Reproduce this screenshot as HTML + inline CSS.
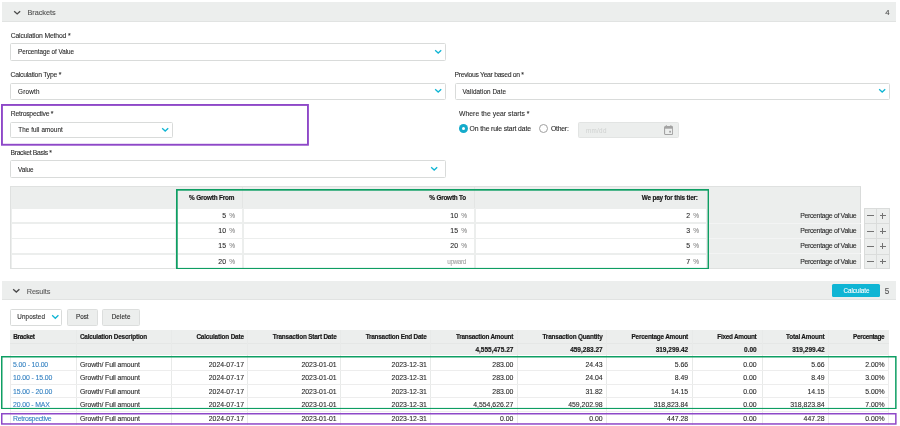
<!DOCTYPE html>
<html><head><meta charset="utf-8"><style>
html,body{margin:0;padding:0;background:#fff;width:900px;height:426px;overflow:hidden;position:relative;font-family:"Liberation Sans",sans-serif;}
.t{position:absolute;line-height:1;white-space:nowrap;-webkit-text-stroke:0.1px currentColor;}
body{will-change:transform;}
.b{position:absolute;}
</style></head><body>
<div class="b" style="left:2.00px;top:2.00px;width:894.00px;height:20.40px;background:#eceeed;border-bottom:1px solid #e1e3e2;box-sizing:border-box"></div>
<svg class="b" style="left:13.70px;top:10.90px;overflow:visible" width="6.30" height="3.70"><path d="M0.68 0.68 L3.15 2.89 L5.63 0.68" fill="none" stroke="#4a4a4a" stroke-width="1.35" stroke-linecap="square" stroke-linejoin="miter"/></svg>
<div class="t" style="left:27.50px;top:9px;font-size:7.3px;font-weight:400;color:#505050;letter-spacing:-0.042px;">Brackets</div>
<div class="t" style="left:489.60px;width:400px;text-align:right;top:9px;font-size:7.8px;font-weight:400;color:#4e4e4e;">4</div>
<div class="t" style="left:10.70px;top:33px;font-size:6.8px;font-weight:400;color:#2e2e2e;letter-spacing:-0.150px;">Calculation Method *</div>
<div class="b" style="left:10.00px;top:43.30px;width:436.00px;height:17.30px;background:#fff;border:1px solid #d9dbda;border-radius:1.5px;box-sizing:border-box"></div>
<div class="t" style="left:18.00px;top:49px;font-size:6.3px;font-weight:400;color:#2a2a2a;letter-spacing:-0.035px;">Percentage of Value</div>
<svg class="b" style="left:435.00px;top:50.15px;overflow:visible" width="6.40" height="3.80"><path d="M0.68 0.68 L3.20 2.99 L5.72 0.68" fill="none" stroke="#0fb5d4" stroke-width="1.35" stroke-linecap="square" stroke-linejoin="miter"/></svg>
<div class="t" style="left:10.50px;top:72px;font-size:6.8px;font-weight:400;color:#2e2e2e;letter-spacing:-0.217px;">Calculation Type *</div>
<div class="b" style="left:10.00px;top:82.50px;width:436.00px;height:17.10px;background:#fff;border:1px solid #d9dbda;border-radius:1.5px;box-sizing:border-box"></div>
<div class="t" style="left:18.00px;top:89px;font-size:6.3px;font-weight:400;color:#2a2a2a;letter-spacing:0.239px;">Growth</div>
<svg class="b" style="left:435.00px;top:89.25px;overflow:visible" width="6.40" height="3.80"><path d="M0.68 0.68 L3.20 2.99 L5.72 0.68" fill="none" stroke="#0fb5d4" stroke-width="1.35" stroke-linecap="square" stroke-linejoin="miter"/></svg>
<div class="t" style="left:454.50px;top:72px;font-size:6.8px;font-weight:400;color:#2e2e2e;letter-spacing:-0.299px;">Previous Year based on *</div>
<div class="b" style="left:454.50px;top:82.50px;width:435.50px;height:17.10px;background:#fff;border:1px solid #d9dbda;border-radius:1.5px;box-sizing:border-box"></div>
<div class="t" style="left:462.50px;top:89px;font-size:6.3px;font-weight:400;color:#2a2a2a;letter-spacing:0.089px;">Validation Date</div>
<svg class="b" style="left:879.00px;top:89.25px;overflow:visible" width="6.40" height="3.80"><path d="M0.68 0.68 L3.20 2.99 L5.72 0.68" fill="none" stroke="#0fb5d4" stroke-width="1.35" stroke-linecap="square" stroke-linejoin="miter"/></svg>
<div class="t" style="left:10.80px;top:111px;font-size:6.8px;font-weight:400;color:#2e2e2e;letter-spacing:-0.244px;">Retrospective *</div>
<div class="b" style="left:10.30px;top:121.50px;width:162.30px;height:16.70px;background:#fff;border:1px solid #d9dbda;border-radius:1.5px;box-sizing:border-box"></div>
<div class="t" style="left:18.30px;top:127px;font-size:6.3px;font-weight:400;color:#2a2a2a;letter-spacing:0.077px;">The full amount</div>
<svg class="b" style="left:161.60px;top:128.05px;overflow:visible" width="6.40" height="3.80"><path d="M0.68 0.68 L3.20 2.99 L5.73 0.68" fill="none" stroke="#0fb5d4" stroke-width="1.35" stroke-linecap="square" stroke-linejoin="miter"/></svg>
<svg class="b" style="left:1.20px;top:104.00px" width="307.90" height="41.70"><rect x="0.95" y="0.95" width="306.00" height="39.80" fill="none" stroke="#8e48c8" stroke-width="1.9"/></svg>
<div class="t" style="left:459.00px;top:111px;font-size:6.8px;font-weight:400;color:#2e2e2e;letter-spacing:0.044px;">Where the year starts *</div>
<div class="b" style="left:458.7px;top:123.8px;width:9px;height:9px;border-radius:50%;background:#14abcb;"></div>
<div class="b" style="left:461.5px;top:126.6px;width:3.4px;height:3.4px;border-radius:50%;background:#fff;"></div>
<div class="t" style="left:469.60px;top:126px;font-size:6.8px;font-weight:400;color:#2a2a2a;letter-spacing:-0.118px;">On the rule start date</div>
<div class="b" style="left:539.3px;top:124.2px;width:9px;height:9px;border-radius:50%;border:1px solid #a0a0a0;box-sizing:border-box;background:#fff"></div>
<div class="t" style="left:551.00px;top:126px;font-size:6.8px;font-weight:400;color:#2a2a2a;letter-spacing:-0.219px;">Other:</div>
<div class="b" style="left:578.00px;top:121.70px;width:101.30px;height:16.50px;background:#eceeed;border:1px solid #e2e4e3;border-radius:1.5px;box-sizing:border-box"></div>
<div class="t" style="left:586.00px;top:128px;font-size:6.3px;font-weight:400;color:#cfd1d0;letter-spacing:0.287px;-webkit-text-stroke:0;">mm/dd</div>
<svg class="b" style="left:664.2px;top:125px" width="9.2" height="10" viewBox="0 0 9.2 10"><rect x="0.55" y="1.5" width="8.1" height="8" rx="1.1" fill="none" stroke="#a3a3a3" stroke-width="1.1"/><rect x="0.6" y="1.5" width="8" height="2.2" fill="#a3a3a3"/><rect x="1.8" y="0.2" width="1.1" height="2" fill="#a3a3a3"/><rect x="6.3" y="0.2" width="1.1" height="2" fill="#a3a3a3"/><rect x="5.2" y="5.8" width="1.8" height="1.8" fill="#a3a3a3"/></svg>
<div class="t" style="left:10.50px;top:150px;font-size:6.8px;font-weight:400;color:#2e2e2e;letter-spacing:-0.329px;">Bracket Basis *</div>
<div class="b" style="left:10.00px;top:160.20px;width:436.00px;height:17.40px;background:#fff;border:1px solid #d9dbda;border-radius:1.5px;box-sizing:border-box"></div>
<div class="t" style="left:18.00px;top:167px;font-size:6.3px;font-weight:400;color:#2a2a2a;letter-spacing:-0.036px;">Value</div>
<svg class="b" style="left:431.40px;top:167.10px;overflow:visible" width="6.40" height="3.80"><path d="M0.68 0.68 L3.20 2.99 L5.72 0.68" fill="none" stroke="#0fb5d4" stroke-width="1.35" stroke-linecap="square" stroke-linejoin="miter"/></svg>
<div class="b" style="left:10.20px;top:186.20px;width:851.30px;height:83.10px;background:#eceeed;border:1px solid #dfe1e0;border-right-color:#d9dbda;box-sizing:border-box"></div>
<div class="t" style="left:-165.89px;width:400px;text-align:right;top:195px;font-size:6.4px;font-weight:700;color:#181818;-webkit-text-stroke:0.16px currentColor;letter-spacing:-0.195px;">% Growth From</div>
<div class="t" style="left:65.99px;width:400px;text-align:right;top:195px;font-size:6.4px;font-weight:700;color:#181818;-webkit-text-stroke:0.16px currentColor;letter-spacing:-0.209px;">% Growth To</div>
<div class="t" style="left:297.84px;width:400px;text-align:right;top:195px;font-size:6.4px;font-weight:700;color:#181818;-webkit-text-stroke:0.16px currentColor;letter-spacing:-0.161px;">We pay for this tier:</div>
<div class="b" style="left:242.10px;top:187.00px;width:1.10px;height:21.00px;background:#e3e5e4"></div>
<div class="b" style="left:474.20px;top:187.00px;width:1.10px;height:21.00px;background:#e3e5e4"></div>
<div class="b" style="left:11.70px;top:209.20px;width:163.50px;height:13.10px;background:#fff"></div>
<div class="b" style="left:177.60px;top:209.20px;width:64.30px;height:13.10px;background:#fff"></div>
<div class="b" style="left:243.70px;top:209.20px;width:230.20px;height:13.10px;background:#fff"></div>
<div class="b" style="left:475.60px;top:209.20px;width:230.90px;height:13.10px;background:#fff"></div>
<div class="t" style="left:-174.00px;width:400px;text-align:right;top:213px;font-size:6.9px;font-weight:400;color:#2a2a2a;">5</div>
<div class="t" style="left:-165.00px;width:400px;text-align:right;top:213px;font-size:6.6px;font-weight:400;color:#8c8c8c;">%</div>
<div class="t" style="left:58.00px;width:400px;text-align:right;top:213px;font-size:6.9px;font-weight:400;color:#2a2a2a;">10</div>
<div class="t" style="left:67.00px;width:400px;text-align:right;top:213px;font-size:6.6px;font-weight:400;color:#8c8c8c;">%</div>
<div class="t" style="left:290.00px;width:400px;text-align:right;top:213px;font-size:6.9px;font-weight:400;color:#2a2a2a;">2</div>
<div class="t" style="left:299.00px;width:400px;text-align:right;top:213px;font-size:6.6px;font-weight:400;color:#8c8c8c;">%</div>
<div class="t" style="left:456.19px;width:400px;text-align:right;top:213px;font-size:6.9px;font-weight:400;color:#2a2a2a;letter-spacing:-0.312px;">Percentage of Value</div>
<div class="b" style="left:708.00px;top:222.60px;width:152.50px;height:1.00px;background:#f3f4f4"></div>
<div class="b" style="left:864.20px;top:208.30px;width:25.60px;height:60.90px;background:#eceeed;border:1px solid #dadcdb;box-sizing:border-box"></div>
<div class="b" style="left:876.20px;top:208.30px;width:0.80px;height:60.90px;background:#dadcdb"></div>
<div class="b" style="left:864.20px;top:223.10px;width:25.60px;height:0.80px;background:#dadcdb"></div>
<div class="b" style="left:867.00px;top:215.30px;width:7.20px;height:1.10px;background:#737373"></div>
<div class="b" style="left:879.60px;top:215.30px;width:6.70px;height:1.10px;background:#737373"></div>
<div class="b" style="left:882.40px;top:213.00px;width:1.10px;height:5.80px;background:#737373"></div>
<div class="b" style="left:11.70px;top:223.90px;width:163.50px;height:13.90px;background:#fff"></div>
<div class="b" style="left:177.60px;top:223.90px;width:64.30px;height:13.90px;background:#fff"></div>
<div class="b" style="left:243.70px;top:223.90px;width:230.20px;height:13.90px;background:#fff"></div>
<div class="b" style="left:475.60px;top:223.90px;width:230.90px;height:13.90px;background:#fff"></div>
<div class="t" style="left:-174.00px;width:400px;text-align:right;top:228px;font-size:6.9px;font-weight:400;color:#2a2a2a;">10</div>
<div class="t" style="left:-165.00px;width:400px;text-align:right;top:228px;font-size:6.6px;font-weight:400;color:#8c8c8c;">%</div>
<div class="t" style="left:58.00px;width:400px;text-align:right;top:228px;font-size:6.9px;font-weight:400;color:#2a2a2a;">15</div>
<div class="t" style="left:67.00px;width:400px;text-align:right;top:228px;font-size:6.6px;font-weight:400;color:#8c8c8c;">%</div>
<div class="t" style="left:290.00px;width:400px;text-align:right;top:228px;font-size:6.9px;font-weight:400;color:#2a2a2a;">3</div>
<div class="t" style="left:299.00px;width:400px;text-align:right;top:228px;font-size:6.6px;font-weight:400;color:#8c8c8c;">%</div>
<div class="t" style="left:456.19px;width:400px;text-align:right;top:228px;font-size:6.9px;font-weight:400;color:#2a2a2a;letter-spacing:-0.312px;">Percentage of Value</div>
<div class="b" style="left:708.00px;top:238.10px;width:152.50px;height:0.90px;background:#f3f4f4"></div>
<div class="b" style="left:864.20px;top:238.30px;width:25.60px;height:0.80px;background:#dadcdb"></div>
<div class="b" style="left:867.00px;top:230.50px;width:7.20px;height:1.10px;background:#737373"></div>
<div class="b" style="left:879.60px;top:230.50px;width:6.70px;height:1.10px;background:#737373"></div>
<div class="b" style="left:882.40px;top:228.20px;width:1.10px;height:5.80px;background:#737373"></div>
<div class="b" style="left:11.70px;top:239.30px;width:163.50px;height:13.60px;background:#fff"></div>
<div class="b" style="left:177.60px;top:239.30px;width:64.30px;height:13.60px;background:#fff"></div>
<div class="b" style="left:243.70px;top:239.30px;width:230.20px;height:13.60px;background:#fff"></div>
<div class="b" style="left:475.60px;top:239.30px;width:230.90px;height:13.60px;background:#fff"></div>
<div class="t" style="left:-174.00px;width:400px;text-align:right;top:243px;font-size:6.9px;font-weight:400;color:#2a2a2a;">15</div>
<div class="t" style="left:-165.00px;width:400px;text-align:right;top:243px;font-size:6.6px;font-weight:400;color:#8c8c8c;">%</div>
<div class="t" style="left:58.00px;width:400px;text-align:right;top:243px;font-size:6.9px;font-weight:400;color:#2a2a2a;">20</div>
<div class="t" style="left:67.00px;width:400px;text-align:right;top:243px;font-size:6.6px;font-weight:400;color:#8c8c8c;">%</div>
<div class="t" style="left:290.00px;width:400px;text-align:right;top:243px;font-size:6.9px;font-weight:400;color:#2a2a2a;">5</div>
<div class="t" style="left:299.00px;width:400px;text-align:right;top:243px;font-size:6.6px;font-weight:400;color:#8c8c8c;">%</div>
<div class="t" style="left:456.19px;width:400px;text-align:right;top:243px;font-size:6.9px;font-weight:400;color:#2a2a2a;letter-spacing:-0.312px;">Percentage of Value</div>
<div class="b" style="left:708.00px;top:253.20px;width:152.50px;height:1.10px;background:#f3f4f4"></div>
<div class="b" style="left:864.20px;top:253.50px;width:25.60px;height:0.80px;background:#dadcdb"></div>
<div class="b" style="left:867.00px;top:245.70px;width:7.20px;height:1.10px;background:#737373"></div>
<div class="b" style="left:879.60px;top:245.70px;width:6.70px;height:1.10px;background:#737373"></div>
<div class="b" style="left:882.40px;top:243.40px;width:1.10px;height:5.80px;background:#737373"></div>
<div class="b" style="left:11.70px;top:254.60px;width:163.50px;height:13.00px;background:#fff"></div>
<div class="b" style="left:177.60px;top:254.60px;width:64.30px;height:13.00px;background:#fff"></div>
<div class="b" style="left:243.70px;top:254.60px;width:230.20px;height:13.00px;background:#fff"></div>
<div class="b" style="left:475.60px;top:254.60px;width:230.90px;height:13.00px;background:#fff"></div>
<div class="t" style="left:-174.00px;width:400px;text-align:right;top:259px;font-size:6.9px;font-weight:400;color:#2a2a2a;">20</div>
<div class="t" style="left:-165.00px;width:400px;text-align:right;top:259px;font-size:6.6px;font-weight:400;color:#8c8c8c;">%</div>
<div class="t" style="left:65.90px;width:400px;text-align:right;top:259px;font-size:6.4px;font-weight:400;color:#a5a5a5;letter-spacing:-0.398px;">upward</div>
<div class="t" style="left:290.00px;width:400px;text-align:right;top:259px;font-size:6.9px;font-weight:400;color:#2a2a2a;">7</div>
<div class="t" style="left:299.00px;width:400px;text-align:right;top:259px;font-size:6.6px;font-weight:400;color:#8c8c8c;">%</div>
<div class="t" style="left:456.19px;width:400px;text-align:right;top:259px;font-size:6.9px;font-weight:400;color:#2a2a2a;letter-spacing:-0.312px;">Percentage of Value</div>
<div class="b" style="left:867.00px;top:260.90px;width:7.20px;height:1.10px;background:#737373"></div>
<div class="b" style="left:879.60px;top:260.90px;width:6.70px;height:1.10px;background:#737373"></div>
<div class="b" style="left:882.40px;top:258.60px;width:1.10px;height:5.80px;background:#737373"></div>
<svg class="b" style="left:175.80px;top:188.80px" width="533.30" height="80.60"><rect x="0.85" y="0.85" width="531.60" height="78.90" fill="none" stroke="#0e9e63" stroke-width="1.7"/></svg>
<div class="b" style="left:2.00px;top:281.00px;width:894.00px;height:19.20px;background:#eceeed;border-bottom:1px solid #e1e3e2;box-sizing:border-box"></div>
<svg class="b" style="left:13.10px;top:288.50px;overflow:visible" width="6.60" height="3.90"><path d="M0.68 0.68 L3.30 3.09 L5.92 0.68" fill="none" stroke="#4a4a4a" stroke-width="1.35" stroke-linecap="square" stroke-linejoin="miter"/></svg>
<div class="t" style="left:26.80px;top:288px;font-size:7.3px;font-weight:400;color:#5c5c5c;letter-spacing:-0.140px;">Results</div>
<div class="b" style="left:832.20px;top:283.50px;width:47.80px;height:13.90px;background:#0fb5d4;border-radius:1.5px"></div>
<div class="t" style="left:843.60px;top:288px;font-size:6.3px;font-weight:400;color:#ffffff;letter-spacing:-0.058px;">Calculate</div>
<div class="t" style="left:489.40px;width:400px;text-align:right;top:288px;font-size:8.2px;font-weight:400;color:#555555;">5</div>
<div class="b" style="left:9.80px;top:308.50px;width:52.20px;height:17.30px;background:#fff;border:1px solid #d9dbda;border-radius:1.5px;box-sizing:border-box"></div>
<div class="t" style="left:17.30px;top:314px;font-size:6.3px;font-weight:400;color:#2a2a2a;letter-spacing:0.104px;">Unposted</div>
<svg class="b" style="left:51.60px;top:315.20px;overflow:visible" width="6.60" height="4.00"><path d="M0.65 0.65 L3.30 3.22 L5.95 0.65" fill="none" stroke="#0fb5d4" stroke-width="1.3" stroke-linecap="square" stroke-linejoin="miter"/></svg>
<div class="b" style="left:66.60px;top:308.50px;width:31.00px;height:17.30px;background:#eceeed;border:1px solid #dcdedd;border-radius:1.5px;box-sizing:border-box"></div>
<div class="t" style="left:76.00px;top:314px;font-size:6.3px;font-weight:400;color:#2a2a2a;letter-spacing:-0.002px;">Post</div>
<div class="b" style="left:102.30px;top:308.50px;width:37.60px;height:17.30px;background:#eceeed;border:1px solid #dcdedd;border-radius:1.5px;box-sizing:border-box"></div>
<div class="t" style="left:111.70px;top:314px;font-size:6.3px;font-weight:400;color:#2a2a2a;letter-spacing:0.117px;">Delete</div>
<div class="b" style="left:10.00px;top:329.90px;width:878.70px;height:24.90px;background:#eceeed"></div>
<div class="b" style="left:10.00px;top:342.80px;width:878.70px;height:0.80px;background:#e5e7e6"></div>
<div class="b" style="left:75.95px;top:329.90px;width:0.90px;height:95.60px;background:#e8eae9"></div>
<div class="b" style="left:170.95px;top:329.90px;width:0.90px;height:95.60px;background:#e8eae9"></div>
<div class="b" style="left:246.85px;top:329.90px;width:0.90px;height:95.60px;background:#e8eae9"></div>
<div class="b" style="left:339.85px;top:329.90px;width:0.90px;height:95.60px;background:#e8eae9"></div>
<div class="b" style="left:429.85px;top:329.90px;width:0.90px;height:95.60px;background:#e8eae9"></div>
<div class="b" style="left:516.55px;top:329.90px;width:0.90px;height:95.60px;background:#e8eae9"></div>
<div class="b" style="left:606.25px;top:329.90px;width:0.90px;height:95.60px;background:#e8eae9"></div>
<div class="b" style="left:691.95px;top:329.90px;width:0.90px;height:95.60px;background:#e8eae9"></div>
<div class="b" style="left:761.55px;top:329.90px;width:0.90px;height:95.60px;background:#e8eae9"></div>
<div class="b" style="left:828.25px;top:329.90px;width:0.90px;height:95.60px;background:#e8eae9"></div>
<div class="b" style="left:9.50px;top:354.80px;width:0.90px;height:70.70px;background:#ececec"></div>
<div class="b" style="left:888.30px;top:354.80px;width:0.90px;height:70.70px;background:#ececec"></div>
<div class="t" style="left:13.30px;top:334px;font-size:6.4px;font-weight:700;color:#181818;-webkit-text-stroke:0.16px currentColor;letter-spacing:-0.297px;">Bracket</div>
<div class="t" style="left:79.90px;top:334px;font-size:6.4px;font-weight:700;color:#181818;-webkit-text-stroke:0.16px currentColor;letter-spacing:-0.190px;">Calculation Description</div>
<div class="t" style="left:-156.16px;width:400px;text-align:right;top:334px;font-size:6.4px;font-weight:700;color:#181818;-webkit-text-stroke:0.16px currentColor;letter-spacing:-0.163px;">Calculation Date</div>
<div class="t" style="left:-63.49px;width:400px;text-align:right;top:334px;font-size:6.4px;font-weight:700;color:#181818;-webkit-text-stroke:0.16px currentColor;letter-spacing:-0.187px;">Transaction Start Date</div>
<div class="t" style="left:26.57px;width:400px;text-align:right;top:334px;font-size:6.4px;font-weight:700;color:#181818;-webkit-text-stroke:0.16px currentColor;letter-spacing:-0.223px;">Transaction End Date</div>
<div class="t" style="left:113.17px;width:400px;text-align:right;top:334px;font-size:6.4px;font-weight:700;color:#181818;-webkit-text-stroke:0.16px currentColor;letter-spacing:-0.237px;">Transaction Amount</div>
<div class="t" style="left:202.53px;width:400px;text-align:right;top:334px;font-size:6.4px;font-weight:700;color:#181818;-webkit-text-stroke:0.16px currentColor;letter-spacing:-0.177px;">Transaction Quantity</div>
<div class="t" style="left:287.98px;width:400px;text-align:right;top:334px;font-size:6.4px;font-weight:700;color:#181818;-webkit-text-stroke:0.16px currentColor;letter-spacing:-0.220px;">Percentage Amount</div>
<div class="t" style="left:356.43px;width:400px;text-align:right;top:334px;font-size:6.4px;font-weight:700;color:#181818;-webkit-text-stroke:0.16px currentColor;letter-spacing:-0.275px;">Fixed Amount</div>
<div class="t" style="left:424.53px;width:400px;text-align:right;top:334px;font-size:6.4px;font-weight:700;color:#181818;-webkit-text-stroke:0.16px currentColor;letter-spacing:-0.166px;">Total Amount</div>
<div class="t" style="left:484.39px;width:400px;text-align:right;top:334px;font-size:6.4px;font-weight:700;color:#181818;-webkit-text-stroke:0.16px currentColor;letter-spacing:-0.312px;">Percentage</div>
<div class="t" style="left:113.40px;width:400px;text-align:right;top:347px;font-size:6.5px;font-weight:700;color:#181818;-webkit-text-stroke:0.16px currentColor;">4,555,475.27</div>
<div class="t" style="left:202.70px;width:400px;text-align:right;top:347px;font-size:6.5px;font-weight:700;color:#181818;-webkit-text-stroke:0.16px currentColor;">459,283.27</div>
<div class="t" style="left:288.20px;width:400px;text-align:right;top:347px;font-size:6.5px;font-weight:700;color:#181818;-webkit-text-stroke:0.16px currentColor;">319,299.42</div>
<div class="t" style="left:356.70px;width:400px;text-align:right;top:347px;font-size:6.5px;font-weight:700;color:#181818;-webkit-text-stroke:0.16px currentColor;">0.00</div>
<div class="t" style="left:424.70px;width:400px;text-align:right;top:347px;font-size:6.5px;font-weight:700;color:#181818;-webkit-text-stroke:0.16px currentColor;">319,299.42</div>
<div class="b" style="left:10.00px;top:370.20px;width:878.70px;height:0.80px;background:#ededed"></div>
<div class="b" style="left:10.00px;top:383.80px;width:878.70px;height:0.80px;background:#ededed"></div>
<div class="b" style="left:10.00px;top:397.40px;width:878.70px;height:0.80px;background:#ededed"></div>
<div class="b" style="left:10.00px;top:410.90px;width:878.70px;height:0.80px;background:#ededed"></div>
<div class="t" style="left:13.10px;top:362px;font-size:6.9px;font-weight:400;color:#3380c2;letter-spacing:-0.157px;">5.00 - 10.00</div>
<div class="t" style="left:80.00px;top:362px;font-size:6.9px;font-weight:400;color:#2a2a2a;letter-spacing:-0.118px;">Growth/ Full amount</div>
<div class="t" style="left:-156.00px;width:400px;text-align:right;top:362px;font-size:6.9px;font-weight:400;color:#2a2a2a;">2024-07-17</div>
<div class="t" style="left:-63.30px;width:400px;text-align:right;top:362px;font-size:6.9px;font-weight:400;color:#2a2a2a;">2023-01-01</div>
<div class="t" style="left:26.80px;width:400px;text-align:right;top:362px;font-size:6.9px;font-weight:400;color:#2a2a2a;">2023-12-31</div>
<div class="t" style="left:113.40px;width:400px;text-align:right;top:362px;font-size:6.9px;font-weight:400;color:#2a2a2a;">283.00</div>
<div class="t" style="left:202.70px;width:400px;text-align:right;top:362px;font-size:6.9px;font-weight:400;color:#2a2a2a;">24.43</div>
<div class="t" style="left:288.20px;width:400px;text-align:right;top:362px;font-size:6.9px;font-weight:400;color:#2a2a2a;">5.66</div>
<div class="t" style="left:356.70px;width:400px;text-align:right;top:362px;font-size:6.9px;font-weight:400;color:#2a2a2a;">0.00</div>
<div class="t" style="left:424.70px;width:400px;text-align:right;top:362px;font-size:6.9px;font-weight:400;color:#2a2a2a;">5.66</div>
<div class="t" style="left:484.70px;width:400px;text-align:right;top:362px;font-size:6.9px;font-weight:400;color:#2a2a2a;">2.00%</div>
<div class="t" style="left:13.10px;top:375px;font-size:6.9px;font-weight:400;color:#3380c2;letter-spacing:-0.122px;">10.00 - 15.00</div>
<div class="t" style="left:80.00px;top:375px;font-size:6.9px;font-weight:400;color:#2a2a2a;letter-spacing:-0.118px;">Growth/ Full amount</div>
<div class="t" style="left:-156.00px;width:400px;text-align:right;top:375px;font-size:6.9px;font-weight:400;color:#2a2a2a;">2024-07-17</div>
<div class="t" style="left:-63.30px;width:400px;text-align:right;top:375px;font-size:6.9px;font-weight:400;color:#2a2a2a;">2023-01-01</div>
<div class="t" style="left:26.80px;width:400px;text-align:right;top:375px;font-size:6.9px;font-weight:400;color:#2a2a2a;">2023-12-31</div>
<div class="t" style="left:113.40px;width:400px;text-align:right;top:375px;font-size:6.9px;font-weight:400;color:#2a2a2a;">283.00</div>
<div class="t" style="left:202.70px;width:400px;text-align:right;top:375px;font-size:6.9px;font-weight:400;color:#2a2a2a;">24.04</div>
<div class="t" style="left:288.20px;width:400px;text-align:right;top:375px;font-size:6.9px;font-weight:400;color:#2a2a2a;">8.49</div>
<div class="t" style="left:356.70px;width:400px;text-align:right;top:375px;font-size:6.9px;font-weight:400;color:#2a2a2a;">0.00</div>
<div class="t" style="left:424.70px;width:400px;text-align:right;top:375px;font-size:6.9px;font-weight:400;color:#2a2a2a;">8.49</div>
<div class="t" style="left:484.70px;width:400px;text-align:right;top:375px;font-size:6.9px;font-weight:400;color:#2a2a2a;">3.00%</div>
<div class="t" style="left:13.10px;top:389px;font-size:6.9px;font-weight:400;color:#3380c2;letter-spacing:-0.122px;">15.00 - 20.00</div>
<div class="t" style="left:80.00px;top:389px;font-size:6.9px;font-weight:400;color:#2a2a2a;letter-spacing:-0.118px;">Growth/ Full amount</div>
<div class="t" style="left:-156.00px;width:400px;text-align:right;top:389px;font-size:6.9px;font-weight:400;color:#2a2a2a;">2024-07-17</div>
<div class="t" style="left:-63.30px;width:400px;text-align:right;top:389px;font-size:6.9px;font-weight:400;color:#2a2a2a;">2023-01-01</div>
<div class="t" style="left:26.80px;width:400px;text-align:right;top:389px;font-size:6.9px;font-weight:400;color:#2a2a2a;">2023-12-31</div>
<div class="t" style="left:113.40px;width:400px;text-align:right;top:389px;font-size:6.9px;font-weight:400;color:#2a2a2a;">283.00</div>
<div class="t" style="left:202.70px;width:400px;text-align:right;top:389px;font-size:6.9px;font-weight:400;color:#2a2a2a;">31.82</div>
<div class="t" style="left:288.20px;width:400px;text-align:right;top:389px;font-size:6.9px;font-weight:400;color:#2a2a2a;">14.15</div>
<div class="t" style="left:356.70px;width:400px;text-align:right;top:389px;font-size:6.9px;font-weight:400;color:#2a2a2a;">0.00</div>
<div class="t" style="left:424.70px;width:400px;text-align:right;top:389px;font-size:6.9px;font-weight:400;color:#2a2a2a;">14.15</div>
<div class="t" style="left:484.70px;width:400px;text-align:right;top:389px;font-size:6.9px;font-weight:400;color:#2a2a2a;">5.00%</div>
<div class="t" style="left:13.10px;top:402px;font-size:6.9px;font-weight:400;color:#3380c2;letter-spacing:-0.155px;">20.00 - MAX</div>
<div class="t" style="left:80.00px;top:402px;font-size:6.9px;font-weight:400;color:#2a2a2a;letter-spacing:-0.118px;">Growth/ Full amount</div>
<div class="t" style="left:-156.00px;width:400px;text-align:right;top:402px;font-size:6.9px;font-weight:400;color:#2a2a2a;">2024-07-17</div>
<div class="t" style="left:-63.30px;width:400px;text-align:right;top:402px;font-size:6.9px;font-weight:400;color:#2a2a2a;">2023-01-01</div>
<div class="t" style="left:26.80px;width:400px;text-align:right;top:402px;font-size:6.9px;font-weight:400;color:#2a2a2a;">2023-12-31</div>
<div class="t" style="left:113.40px;width:400px;text-align:right;top:402px;font-size:6.9px;font-weight:400;color:#2a2a2a;">4,554,626.27</div>
<div class="t" style="left:202.70px;width:400px;text-align:right;top:402px;font-size:6.9px;font-weight:400;color:#2a2a2a;">459,202.98</div>
<div class="t" style="left:288.20px;width:400px;text-align:right;top:402px;font-size:6.9px;font-weight:400;color:#2a2a2a;">318,823.84</div>
<div class="t" style="left:356.70px;width:400px;text-align:right;top:402px;font-size:6.9px;font-weight:400;color:#2a2a2a;">0.00</div>
<div class="t" style="left:424.70px;width:400px;text-align:right;top:402px;font-size:6.9px;font-weight:400;color:#2a2a2a;">318,823.84</div>
<div class="t" style="left:484.70px;width:400px;text-align:right;top:402px;font-size:6.9px;font-weight:400;color:#2a2a2a;">7.00%</div>
<div class="t" style="left:13.10px;top:416px;font-size:6.9px;font-weight:400;color:#3380c2;letter-spacing:-0.299px;">Retrospective</div>
<div class="t" style="left:80.00px;top:416px;font-size:6.9px;font-weight:400;color:#2a2a2a;letter-spacing:-0.118px;">Growth/ Full amount</div>
<div class="t" style="left:-156.00px;width:400px;text-align:right;top:416px;font-size:6.9px;font-weight:400;color:#2a2a2a;">2024-07-17</div>
<div class="t" style="left:-63.30px;width:400px;text-align:right;top:416px;font-size:6.9px;font-weight:400;color:#2a2a2a;">2023-01-01</div>
<div class="t" style="left:26.80px;width:400px;text-align:right;top:416px;font-size:6.9px;font-weight:400;color:#2a2a2a;">2023-12-31</div>
<div class="t" style="left:113.40px;width:400px;text-align:right;top:416px;font-size:6.9px;font-weight:400;color:#2a2a2a;">0.00</div>
<div class="t" style="left:202.70px;width:400px;text-align:right;top:416px;font-size:6.9px;font-weight:400;color:#2a2a2a;">0.00</div>
<div class="t" style="left:288.20px;width:400px;text-align:right;top:416px;font-size:6.9px;font-weight:400;color:#2a2a2a;">447.28</div>
<div class="t" style="left:356.70px;width:400px;text-align:right;top:416px;font-size:6.9px;font-weight:400;color:#2a2a2a;">0.00</div>
<div class="t" style="left:424.70px;width:400px;text-align:right;top:416px;font-size:6.9px;font-weight:400;color:#2a2a2a;">447.28</div>
<div class="t" style="left:484.70px;width:400px;text-align:right;top:416px;font-size:6.9px;font-weight:400;color:#2a2a2a;">0.00%</div>
<svg class="b" style="left:1.30px;top:355.50px" width="895.60" height="53.40"><rect x="0.75" y="0.75" width="894.10" height="51.90" fill="none" stroke="#0e9e63" stroke-width="1.5"/></svg>
<svg class="b" style="left:1.30px;top:413.00px" width="895.60" height="11.70"><rect x="0.75" y="0.75" width="894.10" height="10.20" fill="none" stroke="#8e48c8" stroke-width="1.5"/></svg>
</body></html>
